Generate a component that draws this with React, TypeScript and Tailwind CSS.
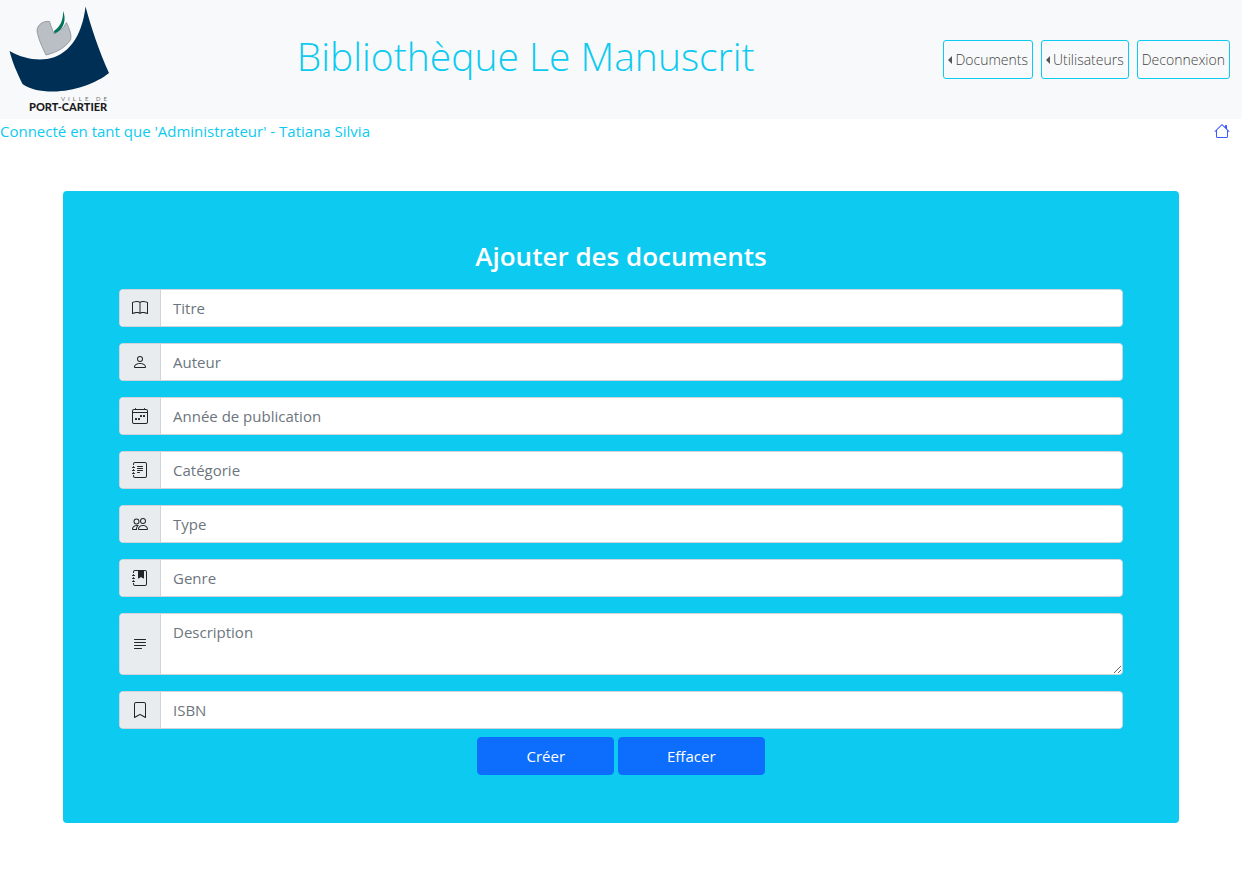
import type { ReactNode } from "react";
import type { IconType } from "react-icons";
import {
  BsBook,
  BsBookmark,
  BsCalendar4Week,
  BsHouse,
  BsJournalBookmarkFill,
  BsJournalText,
  BsJustifyLeft,
  BsPeople,
  BsPerson,
} from "react-icons/bs";

function Logo() {
  return (
    <a href="#" aria-label="Ville de Port-Cartier" className="shrink-0">
      <svg viewBox="0 0 120 119" className="block h-[119px] w-[120px]">
        <path
          d="M9.500 51 C22 58 34 60.500 47 59 C67 56 82 38 85.500 6.500 C91 27 99 51 109 73 C97 83 74 91.500 53 91.500 C40 91.500 29 89 22.500 84 C17 73 12 61 9.500 51 Z"
          fill="#002f55"
        />
        <path
          d="M46 55 C42 47 38 38 37 31 C37 25 43 20.500 49.500 21.500 L54 34 L63 28 L66.500 22.500 C69.500 29 72 35 70.500 40 C66 47 57 52.500 46 55 Z"
          fill="#b9bfc4"
          stroke="#6f777d"
          strokeWidth="0.6"
        />
        <path
          d="M63 11 C66.500 19 64.500 29.500 54.500 33.500 L54 31 C60 27 63.500 20 63 11 Z"
          fill="#00735c"
        />
        <text
          x="61"
          y="101"
          fill="#6d7176"
          className="font-['Lato',sans-serif] text-[6px] tracking-[0.5em]"
        >
          VILLE DE
        </text>
        <text
          x="29"
          y="111"
          fill="#1c1c1e"
          className="font-['Lato',sans-serif] text-[11px] font-black"
        >
          PORT-CARTIER
        </text>
      </svg>
    </a>
  );
}

function NavButton({ children, caret = false }: { children: ReactNode; caret?: boolean }) {
  return (
    <button
      type="button"
      className="flex h-[39px] items-center gap-[3px] rounded-[3px] border border-[#0dcaf0] px-1 text-[14px] font-light text-[#444]"
    >
      {caret && (
        <svg viewBox="0 0 4 8" className="h-2 w-1" aria-hidden="true">
          <path d="M4 0v8L0 4z" fill="#555" />
        </svg>
      )}
      {children}
    </button>
  );
}

type FieldProps = { id: string; label: string; icon: IconType; multiline?: boolean };

const fields: FieldProps[] = [
  { id: "titre", label: "Titre", icon: BsBook },
  { id: "auteur", label: "Auteur", icon: BsPerson },
  { id: "annee", label: "Année de publication", icon: BsCalendar4Week },
  { id: "categorie", label: "Catégorie", icon: BsJournalText },
  { id: "type", label: "Type", icon: BsPeople },
  { id: "genre", label: "Genre", icon: BsJournalBookmarkFill },
  { id: "description", label: "Description", icon: BsJustifyLeft, multiline: true },
  { id: "isbn", label: "ISBN", icon: BsBookmark },
];

function Field({ id, label, icon: Icon, multiline = false }: FieldProps) {
  const control =
    "block min-w-0 flex-1 rounded-r border-l border-[#ced4da] bg-white px-3 text-[15px] leading-6 text-[#212529] placeholder:text-[#6c757d] focus:outline-none";
  return (
    <div className="flex rounded border border-[#ced4da] bg-white">
      <label
        htmlFor={id}
        aria-label={label}
        className="flex w-10 shrink-0 items-center justify-center rounded-l bg-[#e9ecef] text-[#212529]"
      >
        <Icon className="size-4" />
      </label>
      {multiline ? (
        <textarea id={id} placeholder={label} className={`${control} h-[60px] resize-y py-1.5`} />
      ) : (
        <input id={id} type="text" placeholder={label} className={`${control} h-9`} />
      )}
    </div>
  );
}

export default function App() {
  return (
    <div className="min-h-screen bg-white font-['Open_Sans','Noto_Sans',sans-serif]">
      <header className="flex items-center bg-[#f8f9fa] pr-3">
        <Logo />
        <h1 className="flex-1 pb-2 text-center text-[39px] leading-[48px] font-light text-[#0dcaf0]">
          Bibliothèque Le Manuscrit
        </h1>
        <nav className="ml-3 flex gap-2">
          <NavButton caret>Documents</NavButton>
          <NavButton caret>Utilisateurs</NavButton>
          <NavButton>Deconnexion</NavButton>
        </nav>
      </header>
      <div className="flex items-center justify-between pr-3 text-[#0dcaf0]">
        <p className="text-[15px] leading-6">
          Connecté en tant que 'Administrateur' - Tatiana Silvia
        </p>
        <a href="#" aria-label="Accueil" className="text-[#3d5afe]">
          <BsHouse className="size-4" />
        </a>
      </div>
      <main className="mx-auto max-w-[1140px] px-3 py-12">
        <form className="rounded bg-[#0dcaf0] px-14 py-12">
          <h2 className="mb-4 text-center text-[26px] leading-[34px] font-semibold text-white">
            Ajouter des documents
          </h2>
          <div className="flex flex-col gap-4">
            {fields.map((field) => (
              <Field key={field.id} {...field} />
            ))}
          </div>
          <div className="mt-2 flex justify-center gap-1 text-[15px] leading-6 text-white">
            <button
              type="submit"
              className="h-[38px] rounded border border-[#0d6efd] bg-[#0d6efd] px-12"
            >
              Créer
            </button>
            <button
              type="reset"
              className="h-[38px] rounded border border-[#0d6efd] bg-[#0d6efd] px-12"
            >
              Effacer
            </button>
          </div>
        </form>
      </main>
    </div>
  );
}
